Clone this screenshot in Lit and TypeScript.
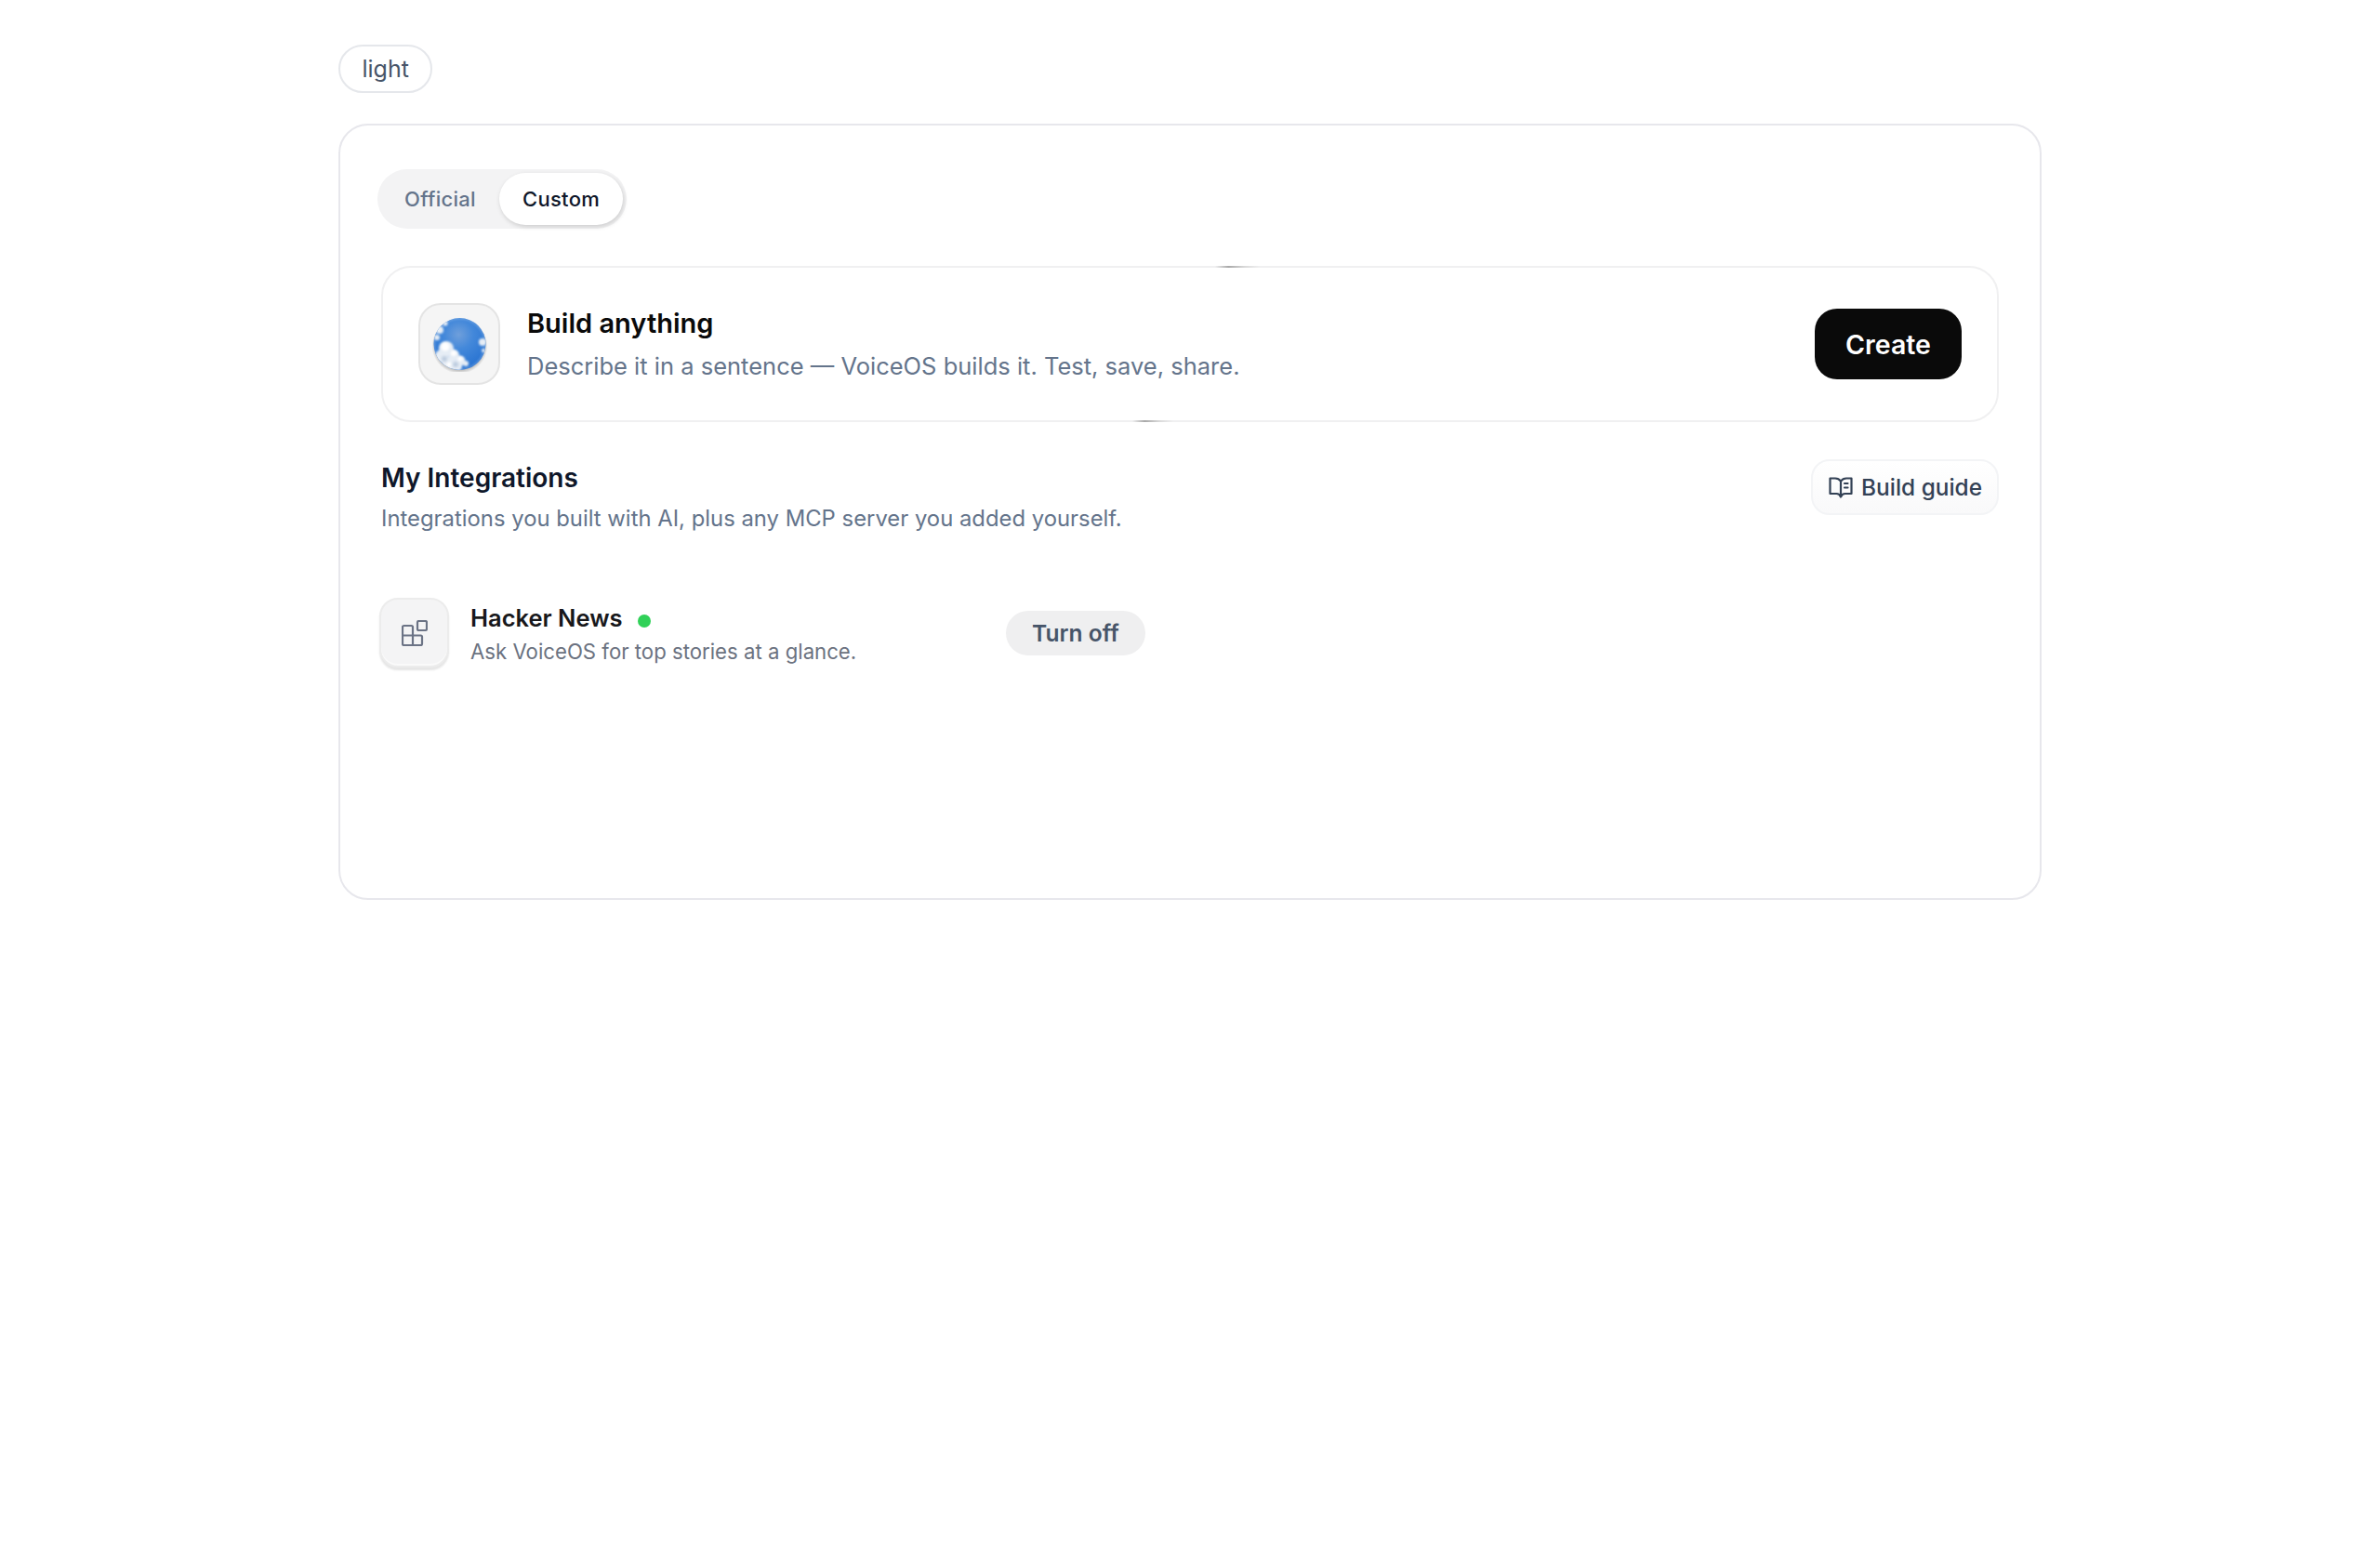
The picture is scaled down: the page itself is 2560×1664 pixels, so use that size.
import { LitElement, html, css } from 'lit'
import { customElement } from 'lit/decorators.js'

@customElement('app-root')
export class AppRoot extends LitElement {
  static styles = css`
    :host {
      display: block;
      min-height: 1664px;
      background: #fff;
      font-family: Inter, 'Liberation Sans', sans-serif;
      color: #0f172a;
    }

    .page {
      width: 1832px;
      margin-left: 364px;
      padding-top: 48px;
    }

    .theme-pill {
      display: inline-flex;
      align-items: center;
      box-sizing: border-box;
      height: 52px;
      padding: 0 23.5px;
      border: 2px solid #e5e7eb;
      border-radius: 26px;
      font-size: 25px;
      color: #475569;
    }

    .card {
      box-sizing: border-box;
      height: 835px;
      margin-top: 33px;
      padding: 47px 44px 0 44px;
      border: 2px solid #e7e7ec;
      border-radius: 32px;
    }

    .tabs {
      display: inline-flex;
      align-items: center;
      height: 64px;
      box-sizing: border-box;
      margin-left: -4px;
      padding: 4px;
      border-radius: 32px;
      background: #f3f3f4;
    }

    .tab {
      display: flex;
      align-items: center;
      height: 56px;
      padding: 0 25px;
      border-radius: 28px;
      font-size: 22px;
      font-weight: 500;
      letter-spacing: 0.3px;
      color: #64748b;
    }

    .tab.active {
      background: #fff;
      color: #0f172a;
      box-shadow: 1px 2px 5px rgba(0, 0, 0, 0.16);
    }

    .banner {
      position: relative;
      box-sizing: border-box;
      display: flex;
      align-items: center;
      height: 168px;
      margin-top: 40px;
      padding: 0 38px;
      border: 2px solid #f0f0f1;
      border-radius: 32px;
    }

    .glint {
      position: absolute;
      height: 2px;
      background: linear-gradient(90deg, transparent, #a8a8a8 30%, #d8d8d8 65%, transparent);
    }

    .glint.top {
      top: -2px;
      left: 895px;
      width: 48px;
    }

    .glint.bottom {
      bottom: -2px;
      left: 806px;
      width: 44px;
    }

    .tile {
      flex: none;
      box-sizing: border-box;
      display: flex;
      align-items: center;
      justify-content: center;
      width: 88px;
      height: 88px;
      border: 2px solid #e4e4e4;
      border-radius: 24px;
      background: #f5f5f5;
    }

    .tile svg {
      display: block;
    }

    .banner-text {
      flex: 1;
      margin-left: 29px;
    }

    .banner-title {
      font-size: 29px;
      font-weight: 600;
      line-height: 36px;
      color: #0a0a0a;
    }

    .banner-sub {
      margin-top: 11px;
      font-size: 25.5px;
      line-height: 34px;
      color: #64748b;
    }

    .create {
      flex: none;
      width: 158px;
      height: 76px;
      border: none;
      border-radius: 24px;
      background: #0a0a0a;
      color: #fff;
      font-family: inherit;
      font-size: 28.5px;
      font-weight: 600;
    }

    .section-head {
      display: flex;
      justify-content: space-between;
      align-items: flex-start;
      margin-top: 40px;
    }

    .section-text {
      padding-top: 2px;
    }

    .section-title {
      font-size: 28px;
      font-weight: 600;
      line-height: 36px;
      color: #0f172a;
    }

    .section-sub {
      margin-top: 9px;
      font-size: 23.85px;
      line-height: 34px;
      color: #64748b;
    }

    .guide {
      box-sizing: border-box;
      display: flex;
      align-items: center;
      gap: 8px;
      height: 60px;
      padding: 0 16px;
      border: 2px solid #f3f4f6;
      border-radius: 20px;
      background: linear-gradient(#fff, #f9f9fa);
      color: #334155;
      font-family: inherit;
      font-size: 24.4px;
      font-weight: 500;
    }

    .row {
      display: flex;
      align-items: center;
      justify-content: space-between;
      width: 824px;
      margin-top: 68px;
      margin-left: -2px;
    }

    .row-left {
      display: flex;
      align-items: center;
      gap: 23px;
    }

    .row-tile {
      flex: none;
      box-sizing: border-box;
      display: flex;
      align-items: center;
      justify-content: center;
      width: 75px;
      height: 75px;
      border: 2px solid #ececec;
      border-radius: 20px;
      background: #f4f4f5;
      box-shadow: inset 0 -2px 0 #fafafa, 0 3px 2px rgba(0, 0, 0, 0.1);
    }

    .row-text {
      padding-top: 3px;
    }

    .row-name {
      display: flex;
      align-items: center;
      gap: 16px;
      font-size: 25.5px;
      font-weight: 600;
      line-height: 34px;
      color: #18181b;
    }

    .dot {
      width: 14px;
      height: 14px;
      margin-top: 5px;
      border-radius: 50%;
      background: #30d158;
    }

    .row-desc {
      margin-top: 4px;
      font-size: 22.2px;
      line-height: 30px;
      color: #6b7280;
    }

    .turn-off {
      width: 150px;
      height: 48px;
      border: none;
      border-radius: 24px;
      background: #efeff0;
      color: #475569;
      font-family: inherit;
      font-size: 24.6px;
      font-weight: 600;
    }
  `

  private renderGlobe() {
    return html`
      <svg width="60" height="60" viewBox="0 0 60 60">
        <defs>
          <radialGradient id="sky" cx="48%" cy="32%" r="70%">
            <stop offset="0" stop-color="#6f9fdb"></stop>
            <stop offset="0.4" stop-color="#4388da"></stop>
            <stop offset="1" stop-color="#2570d0"></stop>
          </radialGradient>
          <radialGradient id="drop" cx="50%" cy="50%" r="50%">
            <stop offset="0.8" stop-color="#000" stop-opacity="0.34"></stop>
            <stop offset="1" stop-color="#000" stop-opacity="0"></stop>
          </radialGradient>
          <filter id="soft"><feGaussianBlur stdDeviation="0.8"></feGaussianBlur></filter>
          <filter id="softer"><feGaussianBlur stdDeviation="1.8"></feGaussianBlur></filter>
          <clipPath id="ball"><circle cx="30.5" cy="30" r="28"></circle></clipPath>
        </defs>
        <circle cx="30.5" cy="32" r="30" fill="url(#drop)"></circle>
        <circle cx="30.5" cy="30" r="28" fill="url(#sky)"></circle>
        <g clip-path="url(#ball)">
          <g fill="#e6edf5" filter="url(#soft)">
            <circle cx="16" cy="35" r="8"></circle>
            <circle cx="24" cy="42" r="6"></circle>
            <circle cx="31" cy="48" r="5.5"></circle>
            <circle cx="11" cy="43" r="7"></circle>
            <circle cx="19" cy="52" r="8"></circle>
            <circle cx="28" cy="54" r="5"></circle>
            <circle cx="37" cy="51" r="3"></circle>
            <circle cx="9" cy="15" r="4"></circle>
            <circle cx="6" cy="23" r="3"></circle>
            <circle cx="15" cy="8" r="2.5"></circle>
            <circle cx="55" cy="28" r="4"></circle>
            <circle cx="56" cy="37" r="2"></circle>
          </g>
          <g fill="#bccbdf" filter="url(#softer)">
            <circle cx="14" cy="46" r="3"></circle>
            <circle cx="26" cy="52" r="3"></circle>
          </g>
          <g fill="#fff" filter="url(#soft)">
            <circle cx="15" cy="33" r="4.5"></circle>
            <circle cx="24" cy="40" r="3"></circle>
            <circle cx="31" cy="46" r="2.5"></circle>
            <circle cx="19" cy="52" r="2.5"></circle>
          </g>
          <circle cx="30.5" cy="30" r="27.5" fill="none" stroke="#fff" stroke-opacity="0.3" stroke-width="1.5" filter="url(#soft)"></circle>
        </g>
      </svg>
    `
  }

  render() {
    return html`
      <div class="page">
        <div class="theme-pill">light</div>
        <div class="card">
          <div class="tabs">
            <div class="tab">Official</div>
            <div class="tab active">Custom</div>
          </div>

          <div class="banner">
            <span class="glint top"></span>
            <span class="glint bottom"></span>
            <div class="tile">${this.renderGlobe()}</div>
            <div class="banner-text">
              <div class="banner-title">Build anything</div>
              <div class="banner-sub">Describe it in a sentence — VoiceOS builds it. Test, save, share.</div>
            </div>
            <button class="create">Create</button>
          </div>

          <div class="section-head">
            <div class="section-text">
              <div class="section-title">My Integrations</div>
              <div class="section-sub">Integrations you built with AI, plus any MCP server you added yourself.</div>
            </div>
            <button class="guide">
              <svg width="28" height="28" viewBox="0 0 28 28" fill="none" stroke="#334155" stroke-width="2.2" stroke-linecap="round" stroke-linejoin="round">
                <path d="M14 7.5C12.5 5.5 10.5 4.5 8 4.5H2.5V21H9.5C11.5 21 13 22 14 24.5C15 22 16.5 21 18.5 21H25.5V4.5H20C17.5 4.5 15.5 5.5 14 7.5V24.5"></path>
                <path d="M18 10H21.5M18 14.5H21.5"></path>
              </svg>
              Build guide
            </button>
          </div>

          <div class="row">
            <div class="row-left">
              <div class="row-tile">
                <svg width="28" height="28" viewBox="0 0 28 28" fill="none" stroke="#6b7385" stroke-width="2.2" stroke-linejoin="round">
                  <rect x="17" y="1" width="10" height="10" rx="1.5"></rect>
                  <path d="M2.5 6H10.5C11.3 6 12 6.7 12 7.5V27H2.5C1.7 27 1 26.3 1 25.5V7.5C1 6.7 1.7 6 2.5 6Z"></path>
                  <path d="M1 16.5H20.5C21.3 16.5 22 17.2 22 18V25.5C22 26.3 21.3 27 20.5 27H12"></path>
                </svg>
              </div>
              <div class="row-text">
                <div class="row-name">Hacker News <span class="dot"></span></div>
                <div class="row-desc">Ask VoiceOS for top stories at a glance.</div>
              </div>
            </div>
            <button class="turn-off">Turn off</button>
          </div>
        </div>
      </div>
    `
  }
}
